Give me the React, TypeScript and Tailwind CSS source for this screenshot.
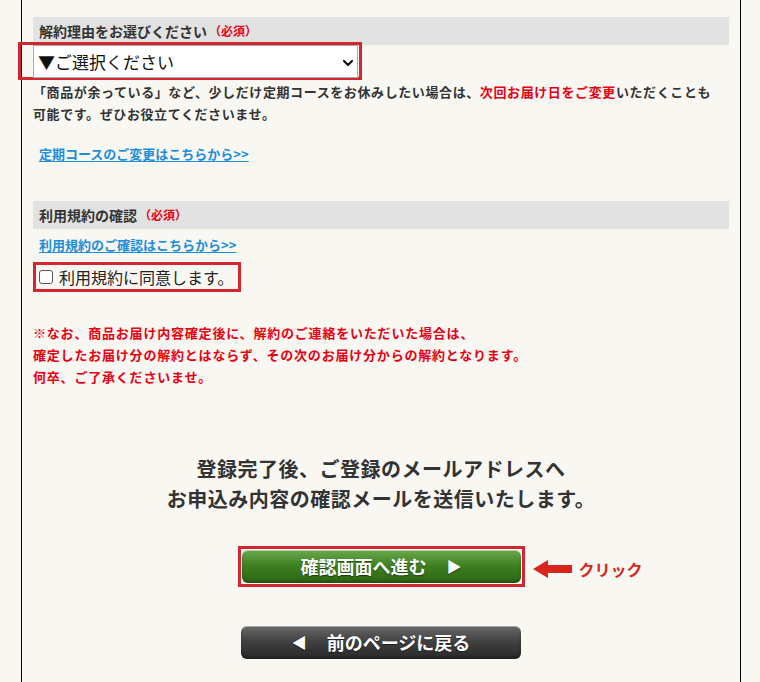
import * as React from "react";

const FONT = { fontFamily: '"Noto Sans CJK JP", "Noto Sans", sans-serif' };

function SectionHeading({ title }: { title: string }) {
  return (
    <div className="flex h-[28px] items-center bg-[#e2e2e2] pl-[6px]">
      <span className="text-[14px] font-bold text-[#333]">{title}</span>
      <span className="ml-[2px] text-[12px] font-bold text-[#e60012]">（必須）</span>
    </div>
  );
}

function TextLink({ children }: { children: React.ReactNode }) {
  return (
    <a href="#" className="text-[13px] font-bold text-[#1e8ed6] underline underline-offset-2">
      {children}
    </a>
  );
}

function Chevron() {
  return (
    <svg width="12" height="8" viewBox="0 0 12 8" className="text-[#111]">
      <path d="M2 2l4 4 4-4" fill="none" stroke="currentColor" strokeWidth="2.2" strokeLinecap="round" strokeLinejoin="round" />
    </svg>
  );
}

function ArrowLeft() {
  return (
    <svg width="40" height="20" viewBox="0 0 40 20" className="shrink-0">
      <path d="M0 10 L15 1 L15 6 L39 6 L39 14 L15 14 L15 19 Z" fill="#d7261e" />
    </svg>
  );
}

export default function App() {
  const [reason, setReason] = React.useState("");
  const [agreed, setAgreed] = React.useState(false);

  return (
    <div className="min-h-[682px] bg-[#f8f7f2]" style={FONT}>
      <div className="ml-[21px] min-h-[682px] w-[720px] border-x border-black px-[11px] pt-[17px]">
        <SectionHeading title="解約理由をお選びください" />

        {/* reason select, framed in red */}
        <div className="relative w-[325px]">
          <span className="pointer-events-none absolute -top-[3px] -bottom-[2px] -left-[15px] -right-[4px] border-[3px] border-[#d22630]" />
          <div className="relative flex h-[33px] items-center border border-[#aaa] bg-white">
            <select
              value={reason}
              onChange={(e) => setReason(e.target.value)}
              className="h-full w-full appearance-none bg-transparent pl-[4px] text-[17px] text-[#111] outline-none"
            >
              <option value="">▼ご選択ください</option>
              <option value="surplus">商品が余っている</option>
              <option value="other">その他</option>
            </select>
            <span className="pointer-events-none absolute right-[3px] top-[13px]">
              <Chevron />
            </span>
          </div>
        </div>

        <p className="mt-[3px] text-[13px] font-bold leading-[22px] tracking-[0.6px] text-[#333]">
          「商品が余っている」など、少しだけ定期コースをお休みしたい場合は、
          <span className="text-[#e60012]">次回お届け日をご変更</span>
          いただくことも
          <br />
          可能です。ぜひお役立てくださいませ。
        </p>

        <div className="mt-[18px] pl-[6px] leading-[18px]">
          <TextLink>定期コースのご変更はこちらから&gt;&gt;</TextLink>
        </div>

        <div className="mt-[38px]">
          <SectionHeading title="利用規約の確認" />
        </div>

        <div className="mt-[5px] pl-[6px] leading-[18px]">
          <TextLink>利用規約のご確認はこちらから&gt;&gt;</TextLink>
        </div>

        {/* agreement checkbox, framed in red */}
        <label className="mt-[8px] flex h-[30px] w-[208px] items-center border-[3px] border-[#d22630] pl-[3px]">
          <input
            type="checkbox"
            checked={agreed}
            onChange={(e) => setAgreed(e.target.checked)}
            className="h-[14px] w-[14px] appearance-none rounded-[3px] border border-[#555] bg-white"
          />
          <span className="ml-[6px] text-[16px] text-[#222]">利用規約に同意します。</span>
        </label>

        <p className="mt-[30px] text-[13px] font-bold leading-[22px] tracking-[0.8px] text-[#e60012]">
          ※なお、商品お届け内容確定後に、解約のご連絡をいただいた場合は、
          <br />
          確定したお届け分の解約とはならず、その次のお届け分からの解約となります。
          <br />
          何卒、ご了承くださいませ。
        </p>

        <p className="mt-[66px] text-center text-[20px] font-bold leading-[30px] tracking-[0.5px] text-[#333]">
          登録完了後、ご登録のメールアドレスへ
          <br />
          お申込み内容の確認メールを送信いたします。
        </p>

        <div className="relative mx-auto mt-[36px] w-[279px]">
          <span className="pointer-events-none absolute -inset-[4px] border-[3px] border-[#d22630]" />
          <button
            type="button"
            className="relative flex h-[33px] w-full items-center justify-center rounded-[6px] bg-gradient-to-b from-[#6aa84c] via-[#3d7e1f] to-[#2c6614] text-[18px] font-bold text-white shadow-[inset_0_1px_0_rgba(255,255,255,0.5),inset_0_-2px_3px_rgba(0,0,0,0.25)] [text-shadow:0_1px_1px_rgba(0,0,0,0.5)]"
          >
            <span>確認画面へ進む</span>
            <span className="ml-[20px] text-[15px]">▶</span>
          </button>
          <div className="absolute left-[291px] top-[7px] flex items-center gap-[6px] whitespace-nowrap">
            <ArrowLeft />
            <span className="text-[16px] font-bold text-[#d7261e]">クリック</span>
          </div>
        </div>

        <div className="mx-auto mt-[43px] w-[280px]">
          <button
            type="button"
            className="flex h-[33px] w-full items-center justify-center rounded-[6px] bg-gradient-to-b from-[#6a6a6a] via-[#3e3e3e] to-[#2a2a2a] text-[18px] font-bold text-white shadow-[inset_0_1px_0_rgba(255,255,255,0.4),inset_0_-2px_3px_rgba(0,0,0,0.3)] [text-shadow:0_1px_1px_rgba(0,0,0,0.5)]"
          >
            <span className="mr-[20px] text-[15px]">◀</span>
            <span>前のページに戻る</span>
          </button>
        </div>
      </div>
    </div>
  );
}
